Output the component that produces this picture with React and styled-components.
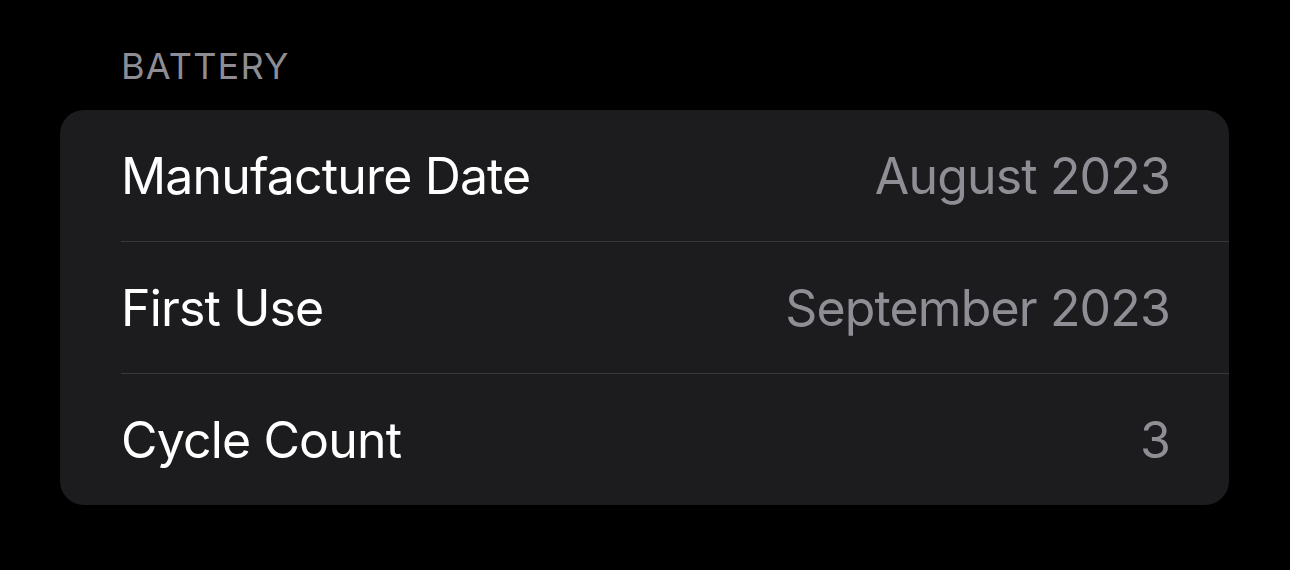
import React from 'react'
import styled, { createGlobalStyle } from 'styled-components'

const GlobalStyle = createGlobalStyle`
  html, body {
    margin: 0;
    padding: 0;
    background: #000;
  }
  body {
    font-family: Inter, "Noto Sans", "Liberation Sans", sans-serif;
    -webkit-font-smoothing: antialiased;
  }
`

const Page = styled.div`
  width: 1290px;
  height: 570px;
  background: #000;
  padding: 44px 61px 0 60px;
  box-sizing: border-box;
`

const SectionHeader = styled.div`
  padding-left: 61px;
  height: 66px;
  font-size: 36px;
  line-height: 44px;
  color: #8d8d93;
  letter-spacing: 1.2px;
`

const Card = styled.div`
  background: #1c1c1e;
  border-radius: 24px;
  overflow: hidden;
`

const Row = styled.div`
  display: flex;
  align-items: center;
  justify-content: space-between;
  margin-left: 61px;
  padding-right: 59px;
  box-sizing: border-box;
  border-top: ${(p) => (p.$first ? 'none' : '1px solid #38383a')};
  height: ${(p) => (p.$first ? '131px' : '132px')};
`

const Label = styled.span`
  font-size: 50px;
  color: #fff;
  letter-spacing: -0.85px;
`

const Value = styled.span`
  font-size: 50px;
  color: #8e8e94;
  letter-spacing: -0.85px;
`

const rows = [
  { label: 'Manufacture Date', value: 'August 2023' },
  { label: 'First Use', value: 'September 2023' },
  { label: 'Cycle Count', value: '3' },
]

export default function App() {
  return (
    <>
      <GlobalStyle />
      <Page>
        <SectionHeader>BATTERY</SectionHeader>
        <Card>
          {rows.map((r, i) => (
            <Row key={r.label} $first={i === 0}>
              <Label>{r.label}</Label>
              <Value>{r.value}</Value>
            </Row>
          ))}
        </Card>
      </Page>
    </>
  )
}
